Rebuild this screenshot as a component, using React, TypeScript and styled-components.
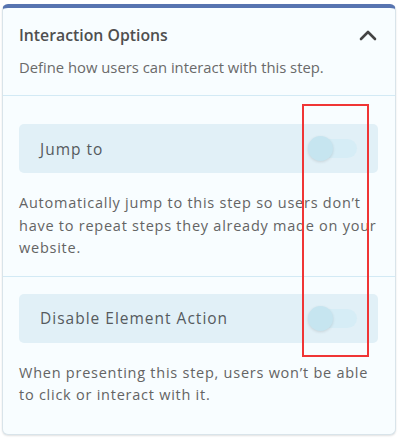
import React from "react";
import styled, { createGlobalStyle } from "styled-components";

const GlobalStyle = createGlobalStyle`
  html, body {
    margin: 0;
    padding: 0;
    background: #ffffff;
  }
  body {
    font-family: "Open Sans", "Noto Sans", sans-serif;
  }
`;

const Page = styled.div`
  position: relative;
  width: 400px;
  height: 442px;
  padding: 4px 4px 0 2px;
  box-sizing: border-box;
`;

const Card = styled.div`
  background: #f8fdff;
  border: 1px solid #d9e4ea;
  border-top: 4px solid #5874b0;
  border-radius: 6px;
  box-shadow: 0 1px 2px rgba(0, 0, 0, 0.12);
  height: 431px;
  box-sizing: border-box;
`;

const Header = styled.div`
  padding: 16px 18px 18px 16px;
  border-bottom: 1px solid #d3eaf5;
  display: flex;
  flex-direction: column;
  gap: 11px;
`;

const TitleRow = styled.div`
  display: flex;
  align-items: center;
  justify-content: space-between;
`;

const Title = styled.h2`
  margin: 0;
  font-size: 15.8px;
  font-weight: 600;
  color: #4f4f4f;
  line-height: 22px;
`;

const Subtitle = styled.p`
  margin: 0;
  font-size: 14.8px;
  color: #6a6a6a;
  line-height: 20px;
`;

const Section = styled.div<{ $top: number; $divided?: boolean }>`
  padding: ${({ $top }) => $top}px 17px ${({ $divided }) => ($divided ? "16px" : "0")} 16px;
  border-bottom: ${({ $divided }) => ($divided ? "1px solid #d3eaf5" : "none")};
`;

const OptionRow = styled.div`
  height: 49px;
  background: #e1f0f7;
  border-radius: 5px;
  display: flex;
  align-items: center;
  justify-content: space-between;
  padding: 0 21px 0 21px;
`;

const OptionLabel = styled.span`
  font-size: 15.5px;
  color: #555a5e;
  letter-spacing: 1px;
`;

const Track = styled.span`
  position: relative;
  width: 47px;
  height: 19px;
  border-radius: 10px;
  background: #d6edf6;
  display: inline-block;
`;

const Knob = styled.span`
  position: absolute;
  left: -2px;
  top: -3px;
  width: 25px;
  height: 25px;
  border-radius: 50%;
  background: #c6e5f0;
  box-shadow: 0 1px 3px rgba(0, 0, 0, 0.12);
`;

const Description = styled.p`
  margin: 19px 0 0 0;
  font-size: 14.5px;
  line-height: 22.5px;
  color: #646464;
  letter-spacing: 0.75px;
`;

const Highlight = styled.div`
  position: absolute;
  left: 302px;
  top: 104px;
  width: 67px;
  height: 253px;
  border: 2px solid #f03535;
  box-sizing: border-box;
  pointer-events: none;
`;

const Toggle = () => (
  <Track>
    <Knob />
  </Track>
);

const ChevronUp = () => (
  <svg width="18" height="12" viewBox="0 0 18 12" fill="none">
    <path d="M2 10 L9 3 L16 10" stroke="#444" strokeWidth="2.6" strokeLinecap="round" strokeLinejoin="round" />
  </svg>
);

export default function App() {
  return (
    <>
      <GlobalStyle />
      <Page>
        <Card>
          <Header>
            <TitleRow>
              <Title>Interaction Options</Title>
              <ChevronUp />
            </TitleRow>
            <Subtitle>Define how users can interact with this step.</Subtitle>
          </Header>
          <Section $top={28} $divided>
            <OptionRow>
              <OptionLabel>Jump to</OptionLabel>
              <Toggle />
            </OptionRow>
            <Description>
              Automatically jump to this step so users don’t have to repeat steps they already made on your website.
            </Description>
          </Section>
          <Section $top={17}>
            <OptionRow>
              <OptionLabel>Disable Element Action</OptionLabel>
              <Toggle />
            </OptionRow>
            <Description>
              When presenting this step, users won’t be able to click or interact with it.
            </Description>
          </Section>
        </Card>
        <Highlight />
      </Page>
    </>
  );
}
